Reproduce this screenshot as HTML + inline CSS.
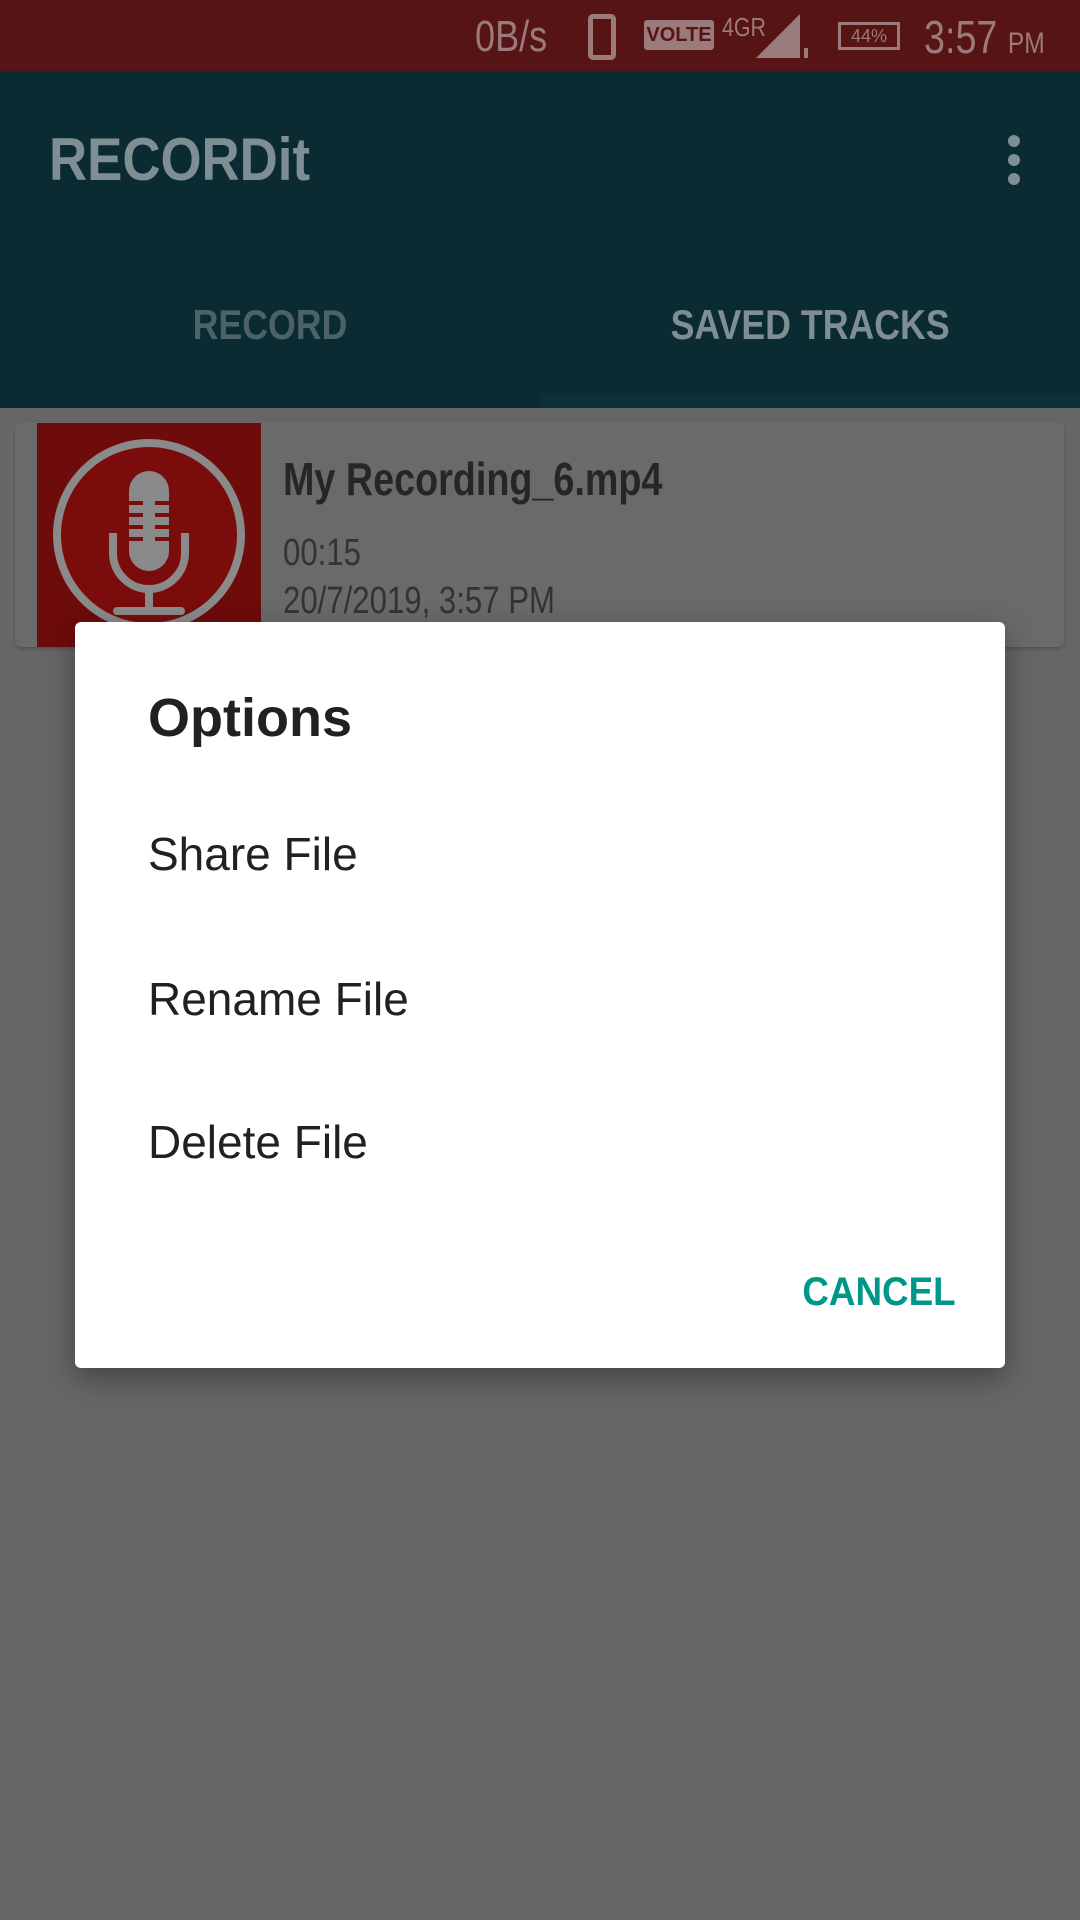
<!DOCTYPE html>
<html><head><meta charset="utf-8"><style>
*{margin:0;padding:0;box-sizing:border-box}
body{width:1080px;height:1920px;background:#666;font-family:"Liberation Sans",sans-serif;position:relative;overflow:hidden}
.abs{position:absolute}
.sb{left:0;top:0;width:1080px;height:71px;background:#561414;color:#9a7a7a}
.ab{left:0;top:71px;width:1080px;height:337px;background:#0b2b33}
.n{transform:scaleX(.82);transform-origin:0 0;white-space:nowrap}
</style></head><body>
<div class="abs sb">
 <div class="abs n" style="left:475px;top:12px;font-size:44px">0B/s</div>
 <div class="abs" style="left:588px;top:14px;width:28px;height:46px;border:5px solid #9a7a7a;border-radius:5px"></div>
 <div class="abs" style="left:644px;top:20px;width:70px;height:30px;background:#9a7a7a;color:#561414;font-size:20px;font-weight:bold;text-align:center;line-height:30px;border-radius:3px">VOLTE</div>
 <div class="abs n" style="left:722px;top:12px;font-size:26px">4GR</div>
 <svg class="abs" style="left:756px;top:14px" width="60" height="46"><polygon points="0,44 44,0 44,44" fill="#9a7a7a"/><rect x="48" y="34" width="4" height="10" fill="#9a7a7a"/></svg>
 <div class="abs" style="left:838px;top:22px;width:62px;height:28px;border:3px solid #9a7a7a;font-size:18px;text-align:center;line-height:22px">44%</div>
 <div class="abs n" style="left:924px;top:10px;font-size:46px">3:57 <span style="font-size:30px">PM</span></div>
</div>
<div class="abs ab">
 <div class="abs n" style="left:49px;top:54px;font-size:60px;font-weight:bold;color:#7e8e92;transform:scaleX(.88)">RECORDit</div>
 <div class="abs" style="left:1008px;top:64px;width:12px;height:12px;border-radius:50%;background:#7e8e92;box-shadow:0 19px 0 #7e8e92,0 38px 0 #7e8e92"></div>
 <div class="abs" style="left:0;top:230px;width:540px;text-align:center;font-size:42px;font-weight:bold;color:#4a6268"><span style="display:inline-block;transform:scaleX(.85)">RECORD</span></div>
 <div class="abs" style="left:540px;top:230px;width:540px;text-align:center;font-size:42px;font-weight:bold;color:#7e8e92"><span style="display:inline-block;transform:scaleX(.85)">SAVED TRACKS</span></div>
 <div class="abs" style="left:540px;top:323px;width:540px;height:14px;background:#0d3038"></div>
</div>
<div class="abs" style="left:15px;top:422px;width:1049px;height:225px;background:#6a6a6a;border-radius:6px;box-shadow:0 2px 3px rgba(0,0,0,.2)"></div>
<div class="abs" style="left:37px;top:423px;width:224px;height:224px;background:#6e0b0b;overflow:hidden">
 <svg width="224" height="224" viewBox="0 0 224 224">
  <circle cx="112" cy="112" r="92" fill="#7a0c0c" stroke="#8a8a8a" stroke-width="8"/>
  <rect x="92" y="48" width="40" height="100" rx="20" fill="#8a8a8a"/>
  <g stroke="#7a0c0c" stroke-width="4"><line x1="92" y1="80" x2="106" y2="80"/><line x1="118" y1="80" x2="132" y2="80"/><line x1="92" y1="92" x2="106" y2="92"/><line x1="118" y1="92" x2="132" y2="92"/><line x1="92" y1="104" x2="106" y2="104"/><line x1="118" y1="104" x2="132" y2="104"/><line x1="92" y1="116" x2="106" y2="116"/><line x1="118" y1="116" x2="132" y2="116"/></g>
  <path d="M76 110 v20 a36 36 0 0 0 72 0 v-20" fill="none" stroke="#8a8a8a" stroke-width="8"/>
  <line x1="112" y1="166" x2="112" y2="185" stroke="#8a8a8a" stroke-width="8"/>
  <line x1="80" y1="188" x2="144" y2="188" stroke="#8a8a8a" stroke-width="8" stroke-linecap="round"/>
 </svg>
</div>
<div class="abs n" style="left:283px;top:452px;font-size:46px;font-weight:bold;color:#262626">My Recording_6.mp4</div>
<div class="abs n" style="left:283px;top:532px;font-size:38px;color:#333">00:15</div>
<div class="abs n" style="left:283px;top:580px;font-size:38px;color:#333">20/7/2019, 3:57 PM</div>
<div class="abs" style="left:75px;top:622px;width:930px;height:746px;background:#fff;border-radius:6px;box-shadow:0 10px 30px rgba(0,0,0,.35)">
 <div class="abs" style="left:73px;top:65px;font-size:54px;font-weight:bold;color:#212121">Options</div>
 <div class="abs" style="left:73px;top:205px;font-size:46px;color:#212121">Share File</div>
 <div class="abs" style="left:73px;top:350px;font-size:46px;color:#212121">Rename File</div>
 <div class="abs" style="left:73px;top:493px;font-size:46px;color:#212121">Delete File</div>
 <div class="abs" style="right:49px;top:648px;font-size:40px;font-weight:bold;color:#009688"><span style="display:inline-block;transform:scaleX(.92);transform-origin:100% 0">CANCEL</span></div>
</div>
</body></html>
